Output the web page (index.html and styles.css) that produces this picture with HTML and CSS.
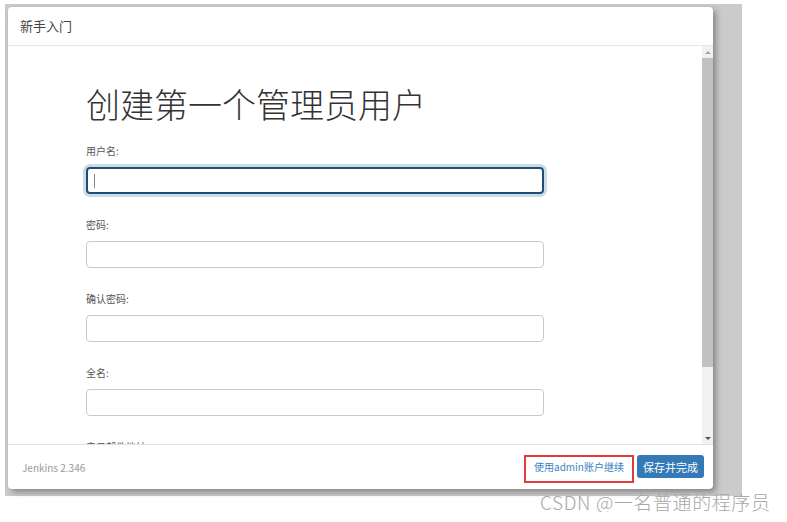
FILE: index.html
```html
<!DOCTYPE html>
<html lang="zh-CN">
<head>
  <meta charset="UTF-8" />
  <title>新手入门</title>
  <link rel="stylesheet" href="styles.css">
</head>
<body>

  <div class="backdrop">
    <div class="modal">
      <div class="modal-header">新手入门</div>

      <div class="modal-body">
        <div class="content">
          <h1>创建第一个管理员用户</h1>
          <div class="form-group">
            <label>用户名:</label>
            <div class="input focused"><span class="caret"></span></div>
          </div>
          <div class="form-group">
            <label>密码:</label>
            <div class="input"></div>
          </div>
          <div class="form-group">
            <label>确认密码:</label>
            <div class="input"></div>
          </div>
          <div class="form-group">
            <label>全名:</label>
            <div class="input"></div>
          </div>
          <div class="form-group">
            <label>电子邮件地址:</label>
            <div class="input"></div>
          </div>
        </div>
        <div class="scrollbar">
          <div class="arrow up"></div>
          <div class="thumb"></div>
          <div class="track"></div>
          <div class="arrow down"></div>
        </div>
      </div>

      <div class="modal-footer">
        <span class="version">Jenkins 2.346</span>
        <span class="actions">
          <span class="link-box"><a class="skip-link">使用admin账户继续</a></span>
          <button class="save-button">保存并完成</button>
        </span>
      </div>
    </div>
  </div>

  <div class="watermark">CSDN @一名普通的程序员</div>

</body>
</html>
```

FILE: styles.css
```css
body {
  margin: 0;
  background-color: #fff;
  font-family: "Noto Sans CJK SC", "Liberation Sans", sans-serif;
  color: #333;
}
.backdrop {
  background-color: #cbcbcb;
  margin: 4px 0 0 5px;
  width: 737px;
  height: 492px;
  padding: 3px;
  box-sizing: border-box;
}
.modal {
  background-color: #fff;
  width: 705px;
  height: 482px;
  border-radius: 4px;
  box-shadow: 3px 3px 6px rgba(0, 0, 0, 0.35);
  display: flex;
  flex-direction: column;
  overflow: hidden;
}
.modal-header {
  height: 38px;
  line-height: 38px;
  padding-left: 12px;
  font-size: 13px;
  color: #444;
  border-bottom: 1px solid #e8e8e8;
}
.modal-body {
  height: 398px;
  display: flex;
  overflow: hidden;
}
.content {
  flex: 1;
  padding: 39px 0 0 78px;
  overflow: hidden;
}
h1 {
  margin: 0 0 21px;
  font-size: 34px;
  line-height: 37px;
  font-weight: 300;
  color: #333;
}
.form-group {
  margin-bottom: 23px;
}
.form-group label {
  display: block;
  font-size: 10px;
  line-height: 16px;
  color: #555;
  margin-bottom: 8px;
}
.input {
  width: 458px;
  height: 27px;
  box-sizing: border-box;
  border: 1px solid #c3ccd4;
  border-radius: 4px;
  position: relative;
}
.input.focused {
  border: 2px solid #1f4d75;
  box-shadow: 0 0 0 3px #c9dcea;
}
.caret {
  position: absolute;
  left: 6px;
  top: 5px;
  width: 1px;
  height: 14px;
  background-color: #888;
}
.scrollbar {
  width: 11px;
  background-color: #f1f1f1;
  display: flex;
  flex-direction: column;
}
.arrow {
  height: 12px;
  display: flex;
  align-items: center;
  justify-content: center;
}
.arrow::after {
  content: "";
  border-left: 3px solid transparent;
  border-right: 3px solid transparent;
}
.arrow.up::after {
  border-bottom: 3px solid #a3a3a3;
}
.arrow.down::after {
  border-top: 3px solid #505050;
}
.thumb {
  height: 309px;
  background-color: #c1c1c1;
}
.track {
  flex: 1;
}
.modal-footer {
  flex: 1;
  border-top: 1px solid #e0e0e0;
  display: flex;
  justify-content: space-between;
  padding: 10px 9px 0 14px;
}
.version {
  font-size: 10px;
  color: #999;
  line-height: 26px;
}
.actions {
  display: flex;
  align-items: flex-start;
  gap: 3px;
}
.link-box {
  width: 110px;
  height: 28px;
  box-sizing: border-box;
  border: 2px solid #e23b3b;
  display: flex;
  align-items: center;
  justify-content: center;
}
.skip-link {
  font-size: 10px;
  color: #3d82c4;
  margin-top: -5px;
}
.save-button {
  width: 67px;
  height: 23px;
  background-color: #337ab7;
  color: #fff;
  border: none;
  border-radius: 3px;
  font-family: "Noto Sans CJK SC", sans-serif;
  font-size: 11px;
  padding: 0;
}
.watermark {
  margin: -4px 0 0 540px;
  font-size: 19px;
  line-height: 20px;
  letter-spacing: 0.6px;
  font-weight: 300;
  color: #a8a8a8;
  white-space: nowrap;
}
```
